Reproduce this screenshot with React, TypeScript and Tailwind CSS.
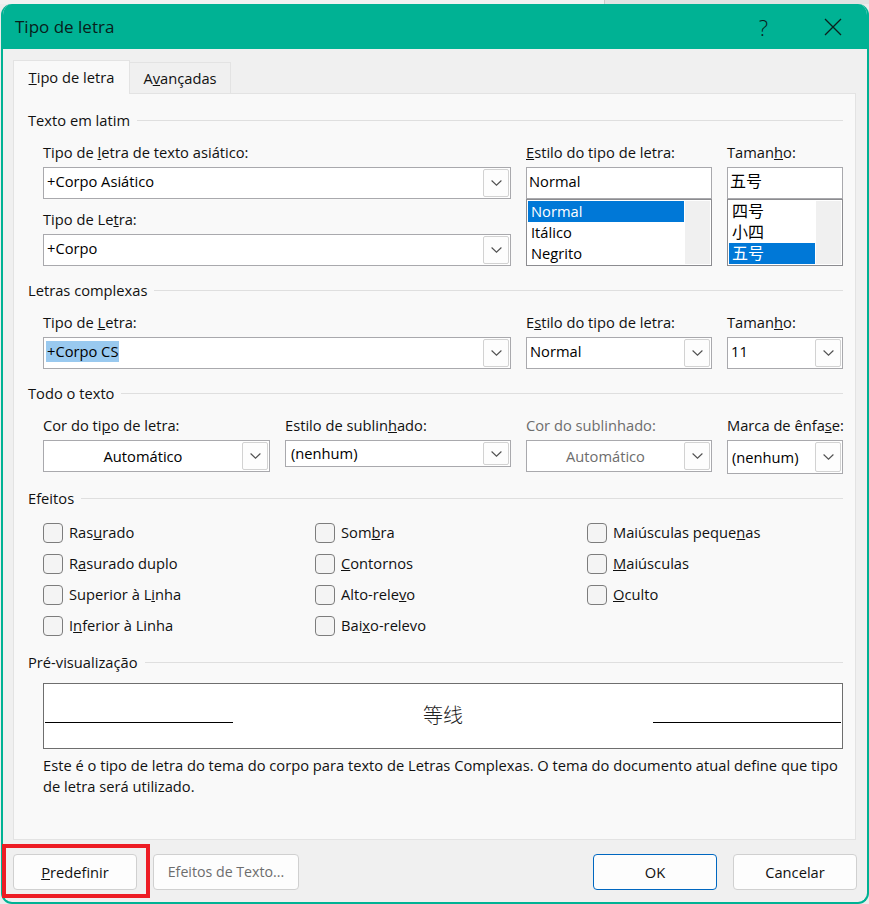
import type { ReactNode } from 'react';

const font = 'font-["Open_Sans","Noto_Sans_CJK_SC",sans-serif]';

function Chevron() {
  return (
    <div className="flex h-full w-[26px] shrink-0 items-center justify-center rounded-[2px] border border-[#d2d2d2] bg-[#fdfdfd]">
      <svg width="11" height="6" viewBox="0 0 11 6" fill="none">
        <path d="M.6.5 5.5 5.2 10.4.5" stroke="#505050" strokeWidth="1.1" />
      </svg>
    </div>
  );
}

function Label({ children, className = 'text-[#111]' }: { children: ReactNode; className?: string }) {
  return <div className={`mb-[4px] h-[22px] whitespace-nowrap text-[14.7px] leading-[22px] ${className}`}>{children}</div>;
}

interface ComboProps {
  text: string;
  center?: boolean;
  disabled?: boolean;
  className?: string;
  textClass?: string;
  selected?: boolean;
}

function Combo({ text, center, disabled, className = 'h-[32px]', textClass = 'pb-[3px] pl-[3px]', selected }: ComboProps) {
  return (
    <div className={`flex items-center border border-[#a9a9ad] bg-white py-[1px] pr-[1px] text-[14.7px] ${className}`}>
      <div className={`flex-1 ${center ? 'text-center' : textClass} ${disabled ? 'text-[#6d6d6d]' : 'text-black'}`}>
        {selected ? <span className="-ml-[1px] inline-block h-[21px] bg-[#99c9ef] px-[1px] leading-[21px]">{text}</span> : text}
      </div>
      <Chevron />
    </div>
  );
}

function PlainInput({ text, className = 'text-[14.7px]' }: { text: string; className?: string }) {
  return <div className={`h-[32px] border border-[#a9a9ad] bg-white pl-[2px] leading-[27px] text-black ${className}`}>{text}</div>;
}

function Section({ title, children }: { title: string; children: ReactNode }) {
  return (
    <section>
      <div className="flex h-[22px] items-center gap-[7px] text-[14.7px] text-[#111]">
        <span className="whitespace-nowrap">{title}</span>
        <div className="h-[1px] flex-1 bg-[#dfdfdf]" />
      </div>
      {children}
    </section>
  );
}

function ListBox({ items, active, className = 'text-[14.7px]' }: { items: string[]; active: number; className?: string }) {
  return (
    <div className={`flex h-[67px] border border-[#8c8c90] bg-white p-[1px] ${className}`}>
      <div className="flex-1">
        {items.map((item, i) => (
          <div key={item} className={`h-[21px] pl-[3px] leading-[21px] ${i === active ? 'bg-[#0078d7] text-white' : 'text-black'}`}>
            {item}
          </div>
        ))}
      </div>
      <div className="ml-[1px] w-[25px] bg-[#f0f0f0]" />
    </div>
  );
}

function Check({ children }: { children: ReactNode }) {
  return (
    <div className="flex h-[31px] items-center gap-[6px] text-[14.7px] text-[#111]">
      <div className="h-[20px] w-[20px] rounded-[4px] border border-[#7d7d7d] bg-[#f4f4f4]" />
      <span className="whitespace-nowrap">{children}</span>
    </div>
  );
}

function Btn({ children, className = '' }: { children: ReactNode; className?: string }) {
  return (
    <div className={`flex h-[36px] items-center justify-center rounded-[4px] border bg-[#fdfdfd] text-[14.7px] ${className}`}>
      {children}
    </div>
  );
}

export default function App() {
  return (
    <div className={`h-[904px] w-[869px] overflow-hidden bg-[#ececec] ${font} relative`}>
      <div className="flex h-[4px]">
        <div className="w-[605px] border-r border-[#c9c9c9] bg-[#f1f1f1]" />
        <div className="flex-1 bg-[#e2e2e2]" />
      </div>

      <div className="ml-[1px] flex h-[900px] flex-col overflow-hidden rounded-[11px] border-x-[2px] border-b-[2px] border-[#00b294] bg-[#f0f0f0]">
        <header className="flex h-[45px] shrink-0 items-center justify-between bg-[#00b294] pl-[12px] pr-[25px] text-[17px] text-[#08201b]">
          <span>Tipo de letra</span>
          <div className="flex items-center gap-[56px]">
            <span className="text-[22px] font-light leading-none">?</span>
            <svg width="18" height="18" viewBox="0 0 18 18" fill="none">
              <path d="M1 1 17 17M17 1 1 17" stroke="#0b211d" strokeWidth="1.3" />
            </svg>
          </div>
        </header>

        <div className="flex-1 pl-[10px] pr-[11px] pt-[11px]">
          <div className="flex h-[33px] items-end text-[14.7px] text-[#111]">
            <div className="relative z-10 -mb-[1px] flex h-[34px] w-[117px] items-center justify-center border border-b-0 border-[#e3e3e3] bg-[#f9f9f9]">
              <span><u>T</u>ipo de letra</span>
            </div>
            <div className="flex h-[31px] w-[101px] items-center justify-center border border-b-0 border-l-0 border-[#e3e3e3] bg-[#f0f0f0]">
              <span>A<u>v</u>ançadas</span>
            </div>
          </div>

          <div className="flex h-[747px] flex-col border border-[#e3e3e3] bg-[#f9f9f9] pl-[14px] pr-[12px] pt-[15px]">
            <Section title="Texto em latim">
              <div className="mt-[10px] grid grid-cols-[468px_186px_116px] gap-x-[15px] pl-[15px]">
                <div>
                  <Label>Tipo de <u>l</u>etra de texto asiático:</Label>
                  <Combo text="+Corpo Asiático" />
                  <div className="h-[9px]" />
                  <Label>Tipo de Le<u>t</u>ra:</Label>
                  <Combo text="+Corpo" />
                </div>
                <div>
                  <Label><u>E</u>stilo do tipo de letra:</Label>
                  <PlainInput text="Normal" />
                  <ListBox items={['Normal', 'Itálico', 'Negrito']} active={0} />
                </div>
                <div>
                  <Label>Taman<u>h</u>o:</Label>
                  <PlainInput text="五号" className="text-[16px]" />
                  <ListBox items={['四号', '小四', '五号']} active={2} className="text-[16px]" />
                </div>
              </div>
            </Section>

            <div className="mt-[13px]">
              <Section title="Letras complexas">
                <div className="mt-[10px] grid grid-cols-[468px_186px_116px] gap-x-[15px] pl-[15px]">
                  <div>
                    <Label>Tipo de <u>L</u>etra:</Label>
                    <Combo text="+Corpo CS" selected />
                  </div>
                  <div>
                    <Label>E<u>s</u>tilo do tipo de letra:</Label>
                    <Combo text="Normal" />
                  </div>
                  <div>
                    <Label>Taman<u>h</u>o:</Label>
                    <Combo text="11" />
                  </div>
                </div>
              </Section>
            </div>

            <div className="mt-[13px]">
              <Section title="Todo o texto">
                <div className="mt-[10px] grid grid-cols-[227px_226px_186px_116px] gap-x-[15px] pl-[15px]">
                  <div>
                    <Label>Cor do ti<u>p</u>o de letra:</Label>
                    <Combo text="Automático" center />
                  </div>
                  <div>
                    <Label>Estilo de sublin<u>h</u>ado:</Label>
                    <Combo text="(nenhum)" className="h-[27px]" textClass="pl-[5px]" />
                  </div>
                  <div>
                    <Label className="text-[#6d6d6d]">Cor do sublinhado:</Label>
                    <Combo text="Automático" center disabled />
                  </div>
                  <div>
                    <Label>Marca de ênfa<u>s</u>e:</Label>
                    <Combo text="(nenhum)" className="h-[34px]" textClass="pl-[4px]" />
                  </div>
                </div>
              </Section>
            </div>

            <div className="mt-[13px]">
              <Section title="Efeitos">
                <div className="mt-[8px] grid grid-cols-[272px_272px_1fr] pl-[15px]">
                  <div>
                    <Check>Ras<u>u</u>rado</Check>
                    <Check>R<u>a</u>surado duplo</Check>
                    <Check>Superior à L<u>i</u>nha</Check>
                    <Check>I<u>n</u>ferior à Linha</Check>
                  </div>
                  <div>
                    <Check>Som<u>b</u>ra</Check>
                    <Check><u>C</u>ontornos</Check>
                    <Check>Alto-rele<u>v</u>o</Check>
                    <Check>Bai<u>x</u>o-relevo</Check>
                  </div>
                  <div>
                    <Check>Maiúsculas peque<u>n</u>as</Check>
                    <Check><u>M</u>aiúsculas</Check>
                    <Check><u>O</u>culto</Check>
                  </div>
                </div>
              </Section>
            </div>

            <div className="mt-[10px]">
              <Section title="Pré-visualização">
                <div className="ml-[15px] mt-[10px] flex h-[66px] items-center justify-between border border-[#6e6e6e] bg-white px-[1px] pt-[12px]">
                  <div className="h-[1px] w-[188px] bg-black" />
                  <span className="-mt-[12px] text-[20px] font-light text-[#222]">等线</span>
                  <div className="h-[1px] w-[188px] bg-black" />
                </div>
                <p className="ml-[15px] mt-[6px] text-[14.7px] leading-[21px] text-[#111]">
                  Este é o tipo de letra do tema do corpo para texto de Letras Complexas. O tema do documento atual define que tipo de letra será utilizado.
                </p>
              </Section>
            </div>
          </div>

          <div className="-mr-[1px] mt-[14px] flex items-center">
            <Btn className="w-[124px] border-[#d0d0d0] text-[#111]"><span><u>P</u>redefinir</span></Btn>
            <Btn className="ml-[16px] w-[146px] border-[#d0d0d0] text-[#6d6d6d]"><span className="text-[14.2px]">Efeitos de Texto...</span></Btn>
            <Btn className="ml-auto w-[124px] border-[#0067c0] text-[#111]">OK</Btn>
            <Btn className="ml-[16px] w-[124px] border-[#d0d0d0] text-[#111]">Cancelar</Btn>
          </div>
        </div>
      </div>

      <div className="absolute left-[2px] top-[844px] h-[54px] w-[148px] border-[4px] border-[#ed1c24]" />
    </div>
  );
}
